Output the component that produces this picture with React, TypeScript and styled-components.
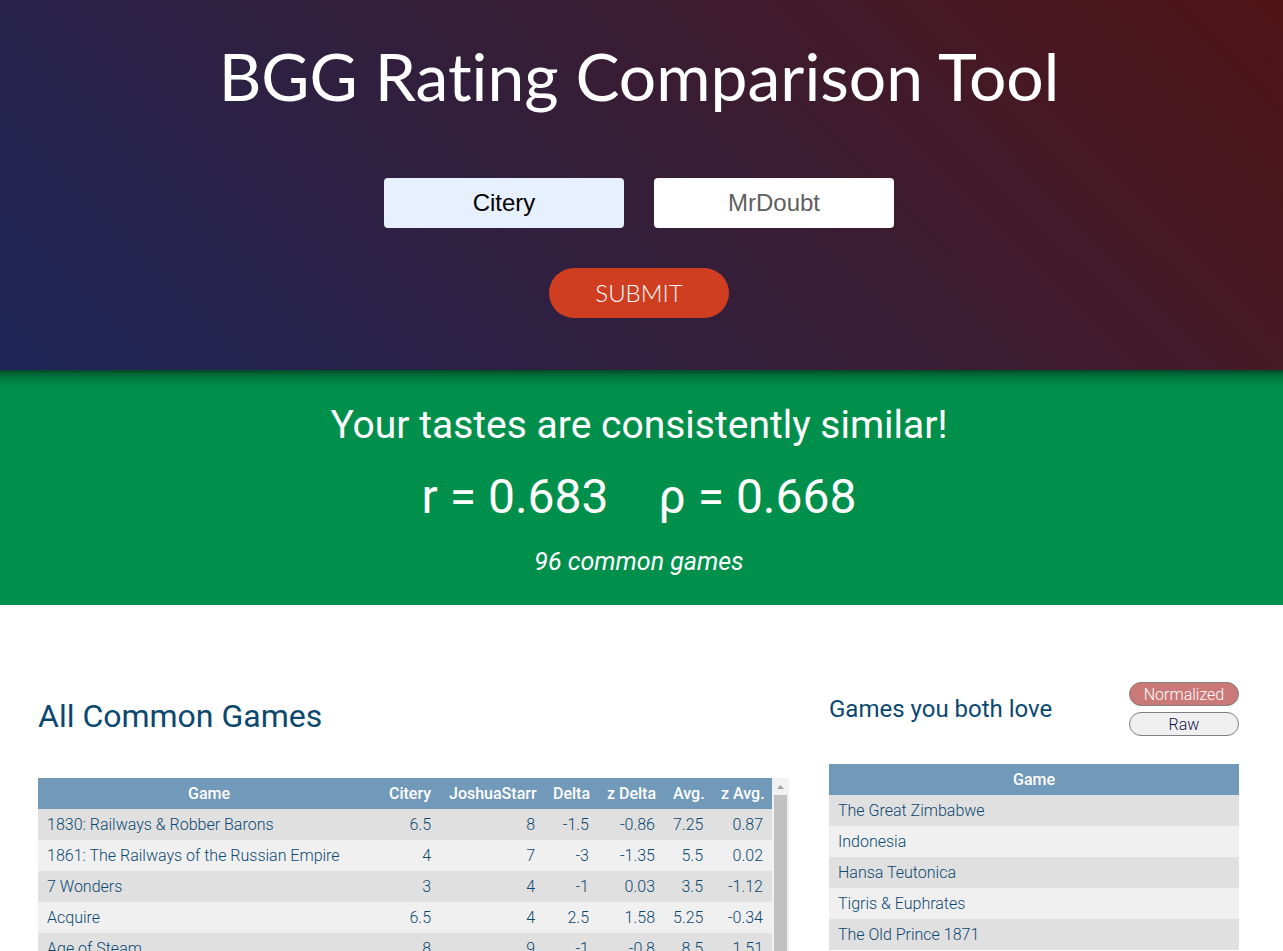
import React, { useState } from "react";
import styled, { createGlobalStyle } from "styled-components";

const GlobalStyle = createGlobalStyle`
  *, *::before, *::after { box-sizing: border-box; }
  body {
    margin: 0;
    background: #fff;
    color: #0b4870;
    font: 300 16px/19px Roboto, sans-serif;
  }
`;

const Hero = styled.header`
  display: flex;
  flex-direction: column;
  align-items: center;
  padding: 36px 5px 52px 0;
  background: linear-gradient(45deg, #1d2558, #351e38 50%, #511416);
`;

const Title = styled.h1`
  margin: 0;
  color: #fff;
  font: 400 66px/80px Lato, sans-serif;
  font-variant-ligatures: none;
  text-align: center;
`;

const Form = styled.form`
  display: flex;
  flex-direction: column;
  align-items: center;
  gap: 40px;
  margin-top: 62px;
`;

const Fields = styled.div`
  display: flex;
  flex-wrap: wrap;
  justify-content: center;
  gap: 30px;
`;

const NameInput = styled.input<{ $filled?: boolean }>`
  width: 240px;
  height: 50px;
  padding: 0;
  border: 0;
  border-radius: 4px;
  background: ${(p) => (p.$filled ? "#e6f0ff" : "#fff")};
  color: #000;
  font: 24px "Liberation Sans", Arial, sans-serif;
  text-align: center;
  &::placeholder { color: #5f5f5f; opacity: 1; }
`;

const Submit = styled.button`
  width: 180px;
  height: 50px;
  padding: 0 0 2px;
  border: 0;
  border-radius: 25px;
  background: #d03e22;
  color: #fff;
  font: 300 24px Lato, sans-serif;
`;

const Result = styled.section`
  display: flex;
  flex-direction: column;
  align-items: center;
  padding: 30px 5px 27px 0;
  background:
    linear-gradient(rgba(0, 0, 0, 0.48), rgba(0, 0, 0, 0.18) 7px, transparent 18px),
    #00904c;
  color: #fff;
  text-align: center;
`;

const Verdict = styled.h2`
  margin: 0;
  font: 400 39px/50px Roboto, sans-serif;
`;

const Scores = styled.div`
  display: flex;
  gap: 50px;
  margin: 18px 0 20px;
  font: 400 48px/58px Roboto, sans-serif;
`;

const Count = styled.p`
  margin: 0;
  font: italic 400 25px/32px Roboto, sans-serif;
`;

const Main = styled.main`
  display: flex;
  align-items: flex-start;
  gap: 40px;
  padding: 77px 44px 0 38px;
`;

const AllGames = styled.section`
  flex: 1;
  min-width: 0;
`;

const Loved = styled.section`
  flex: 0 0 410px;
`;

const PanelHead = styled.div`
  display: flex;
  align-items: center;
  justify-content: space-between;
  margin-bottom: 28px;
`;

const PanelTitle = styled.h2<{ $large?: boolean }>`
  margin: 0;
  font: 400 ${(p) => (p.$large ? "32px/68px" : "24px/54px")} Roboto, sans-serif;
`;

const Toggles = styled.div`
  display: flex;
  flex-direction: column;
  gap: 6px;
`;

const Toggle = styled.button<{ $active: boolean }>`
  width: 110px;
  height: 24px;
  padding: 1px 0 0;
  border: 1px solid #808080;
  border-radius: 12px;
  background: ${(p) => (p.$active ? "#cb7878" : "#f0f0f0")};
  color: ${(p) => (p.$active ? "#fff" : "#10104c")};
  font: 300 16px/20px Roboto, sans-serif;
`;

const Scroller = styled.div`
  display: flex;
`;

const Table = styled.table`
  flex: 1;
  width: 100%;
  min-width: 0;
  table-layout: fixed;
  border-collapse: collapse;
`;

const Col = styled.col<{ $w?: number }>`
  width: ${(p) => (p.$w ? `${p.$w}px` : "auto")};
`;

const Th = styled.th<{ $right?: boolean }>`
  height: 31px;
  padding: 6px 9px;
  background: #7199b9;
  color: #fff;
  font-weight: 500;
  text-align: ${(p) => (p.$right ? "right" : "center")};
  white-space: nowrap;
`;

const Row = styled.tr`
  background: #f0f0f0;
  &:nth-child(odd) { background: #e0e0e0; }
`;

const Td = styled.td<{ $right?: boolean }>`
  height: 31px;
  padding: 6px 9px;
  text-align: ${(p) => (p.$right ? "right" : "left")};
  white-space: nowrap;
`;

const Track = styled.div`
  display: flex;
  flex-direction: column;
  align-items: center;
  flex: 0 0 17px;
  background: #f1f1f1;
`;

const ArrowUp = styled.svg`
  display: block;
  width: 17px;
  height: 17px;
`;

const Thumb = styled.div`
  flex: 1;
  width: 13px;
  background: #c1c1c1;
`;

const columns = [
  { label: "Citery", width: 60 },
  { label: "JoshuaStarr", width: 104 },
  { label: "Delta", width: 54 },
  { label: "z Delta", width: 66 },
  { label: "Avg.", width: 48 },
  { label: "z Avg.", width: 60 },
];

const games: [string, string[]][] = [
  ["1830: Railways & Robber Barons", ["6.5", "8", "-1.5", "-0.86", "7.25", "0.87"]],
  ["1861: The Railways of the Russian Empire", ["4", "7", "-3", "-1.35", "5.5", "0.02"]],
  ["7 Wonders", ["3", "4", "-1", "0.03", "3.5", "-1.12"]],
  ["Acquire", ["6.5", "4", "2.5", "1.58", "5.25", "-0.34"]],
  ["Age of Steam", ["8", "9", "-1", "-0.8", "8.5", "1.51"]],
];

const loved = [
  "The Great Zimbabwe",
  "Indonesia",
  "Hansa Teutonica",
  "Tigris & Euphrates",
  "The Old Prince 1871",
];

export default function App() {
  const [first, setFirst] = useState("Citery");
  const [second, setSecond] = useState("");
  const [mode, setMode] = useState("Normalized");

  return (
    <>
      <GlobalStyle />
      <Hero>
        <Title>BGG Rating Comparison Tool</Title>
        <Form onSubmit={(e) => e.preventDefault()}>
          <Fields>
            <NameInput
              $filled
              aria-label="First user"
              value={first}
              onChange={(e) => setFirst(e.target.value)}
            />
            <NameInput
              aria-label="Second user"
              placeholder="MrDoubt"
              value={second}
              onChange={(e) => setSecond(e.target.value)}
            />
          </Fields>
          <Submit type="submit">SUBMIT</Submit>
        </Form>
      </Hero>
      <Result>
        <Verdict>Your tastes are consistently similar!</Verdict>
        <Scores>
          <span>r = 0.683</span>
          <span>ρ = 0.668</span>
        </Scores>
        <Count>96 common games</Count>
      </Result>
      <Main>
        <AllGames>
          <PanelHead>
            <PanelTitle $large>All Common Games</PanelTitle>
          </PanelHead>
          <Scroller>
            <Table>
              <colgroup>
                <Col />
                {columns.map((c) => <Col key={c.label} $w={c.width} />)}
              </colgroup>
              <thead>
                <tr>
                  <Th scope="col">Game</Th>
                  {columns.map((c) => <Th key={c.label} scope="col" $right>{c.label}</Th>)}
                </tr>
              </thead>
              <tbody>
                {games.map(([name, values]) => (
                  <Row key={name}>
                    <Td>{name}</Td>
                    {values.map((v, i) => <Td key={i} $right>{v}</Td>)}
                  </Row>
                ))}
              </tbody>
            </Table>
            <Track aria-hidden="true">
              <ArrowUp viewBox="0 0 17 17">
                <path d="M5 11h7L8.500 7z" fill="#a3a3a3" />
              </ArrowUp>
              <Thumb />
            </Track>
          </Scroller>
        </AllGames>
        <Loved>
          <PanelHead>
            <PanelTitle>Games you both love</PanelTitle>
            <Toggles>
              {["Normalized", "Raw"].map((m) => (
                <Toggle
                  key={m}
                  type="button"
                  $active={mode === m}
                  aria-pressed={mode === m}
                  onClick={() => setMode(m)}
                >
                  {m}
                </Toggle>
              ))}
            </Toggles>
          </PanelHead>
          <Table>
            <thead>
              <tr><Th scope="col">Game</Th></tr>
            </thead>
            <tbody>
              {loved.map((name) => <Row key={name}><Td>{name}</Td></Row>)}
            </tbody>
          </Table>
        </Loved>
      </Main>
    </>
  );
}
